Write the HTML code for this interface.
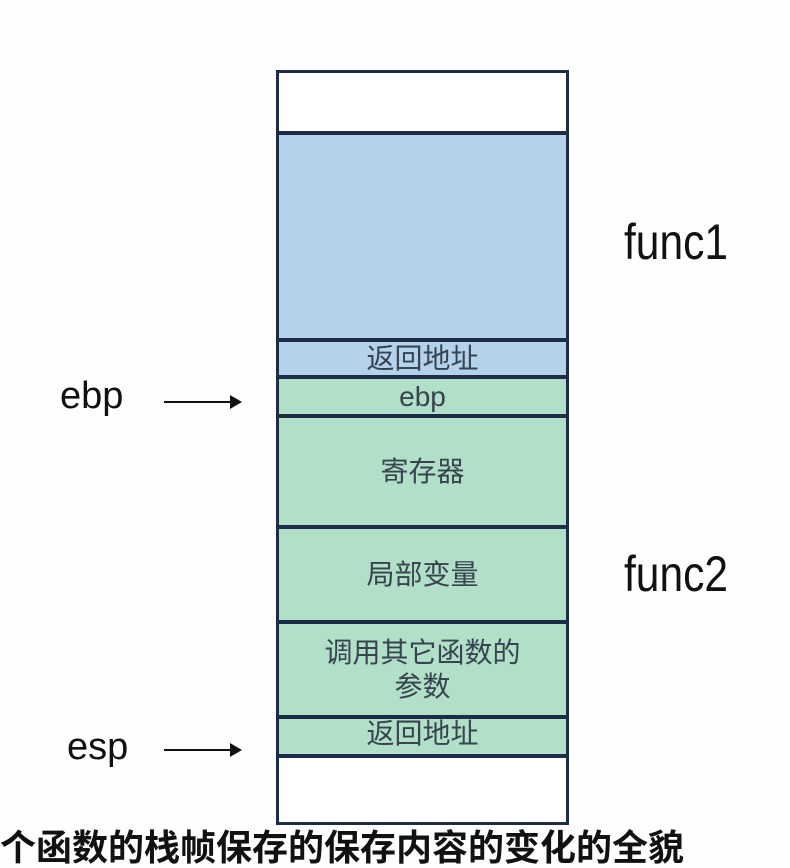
<!DOCTYPE html>
<html><head><meta charset="utf-8"><style>
body{margin:0;width:790px;height:841px;background:#fefefe;position:relative;overflow:hidden;font-family:"Liberation Sans","Noto Sans CJK SC",sans-serif}
.c{position:absolute;left:279px;width:287px;display:flex;align-items:center;justify-content:center;text-align:center;color:#38444f;font-size:28px;line-height:34px}
.l{position:absolute;color:#111;font-size:38px}
.f{position:absolute;color:#111;font-size:50px;transform:scaleX(.85);transform-origin:left}
.ar{position:absolute;height:2px;background:#111;width:76px}
.ar:after{content:"";position:absolute;right:-2px;top:-6px;border-left:12px solid #111;border-top:7px solid transparent;border-bottom:7px solid transparent}
</style></head><body>
<div style="position:absolute;left:276px;top:70px;width:293px;height:755px;background:#1d2c48"></div>
<div class="c" style="top:73px;height:58px;background:#fff"></div>
<div class="c" style="top:135px;height:203px;background:#b4d2eb"></div>
<div class="c" style="top:342px;height:33px;background:#b4d2eb">返回地址</div>
<div class="c" style="top:379px;height:35px;background:#b1dfc8">ebp</div>
<div class="c" style="top:418px;height:107px;background:#b1dfc8">寄存器</div>
<div class="c" style="top:529px;height:91px;background:#b1dfc8">局部变量</div>
<div class="c" style="top:624px;height:91px;background:#b1dfc8">调用其它函数的<br>参数</div>
<div class="c" style="top:719px;height:35px;background:#b1dfc8;align-items:flex-start;line-height:30px">返回地址</div>
<div class="c" style="top:758px;height:64px;background:#fff"></div>
<div class="f" style="left:624px;top:213px">func1</div>
<div class="f" style="left:624px;top:545px">func2</div>
<div class="l" style="left:60px;top:375px">ebp</div>
<div class="ar" style="left:164px;top:401px"></div>
<div class="l" style="left:67px;top:726px">esp</div>
<div class="ar" style="left:164px;top:749px"></div>
<div style="position:absolute;left:0;top:828px;font-size:36px;font-weight:bold;color:#111;white-space:nowrap;line-height:40px">个函数的栈帧保存的保存内容的变化的全貌</div>
</body></html>
